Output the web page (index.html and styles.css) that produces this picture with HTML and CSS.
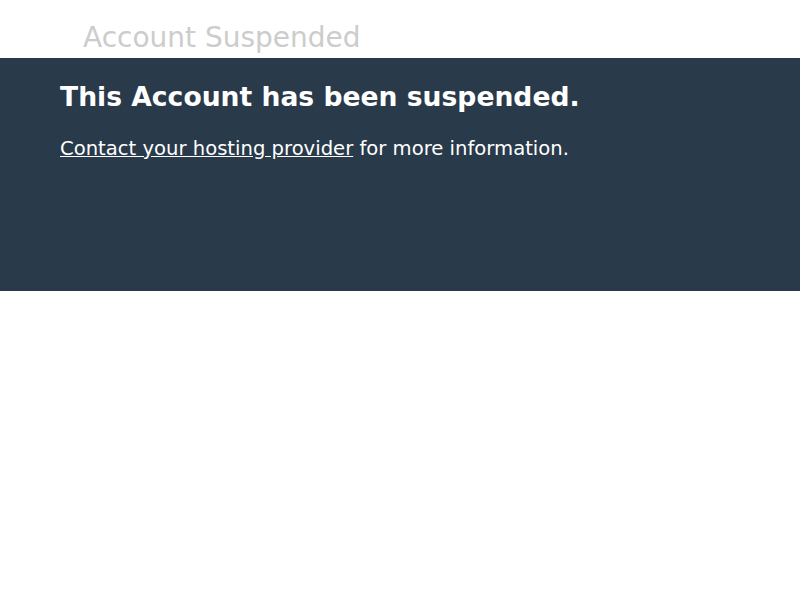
FILE: index.html
```html
<!DOCTYPE html>
<html>
<head>
<meta charset="utf-8">
<title>Account Suspended</title>
<link rel="stylesheet" href="styles.css">
</head>
<body>
<header class="top">
  <div class="page-title">Account Suspended</div>
</header>
<section class="band">
  <h1 class="headline">This Account has been suspended.</h1>
  <p class="info"><a class="link" href="#">Contact your hosting provider</a> for more information.</p>
</section>
</body>
</html>
```

FILE: styles.css
```css
html, body {
  margin: 0;
  padding: 0;
  background: #ffffff;
  font-family: "DejaVu Sans", sans-serif;
}
.top {
  height: 58px;
  box-sizing: border-box;
  padding-left: 83px;
  padding-top: 20px;
}
.page-title {
  font-size: 28px;
  line-height: 36px;
  color: #cccccc;
}
.band {
  background: #293a4a;
  height: 233px;
  box-sizing: border-box;
  padding: 23px 60px 0;
  color: #ffffff;
}
.headline {
  margin: 0;
  font-size: 26.6px;
  line-height: 32px;
  font-weight: bold;
}
.info {
  margin: 23px 0 0;
  font-size: 19.6px;
  line-height: 26px;
}
.link {
  color: #ffffff;
  text-decoration: underline;
}
```
